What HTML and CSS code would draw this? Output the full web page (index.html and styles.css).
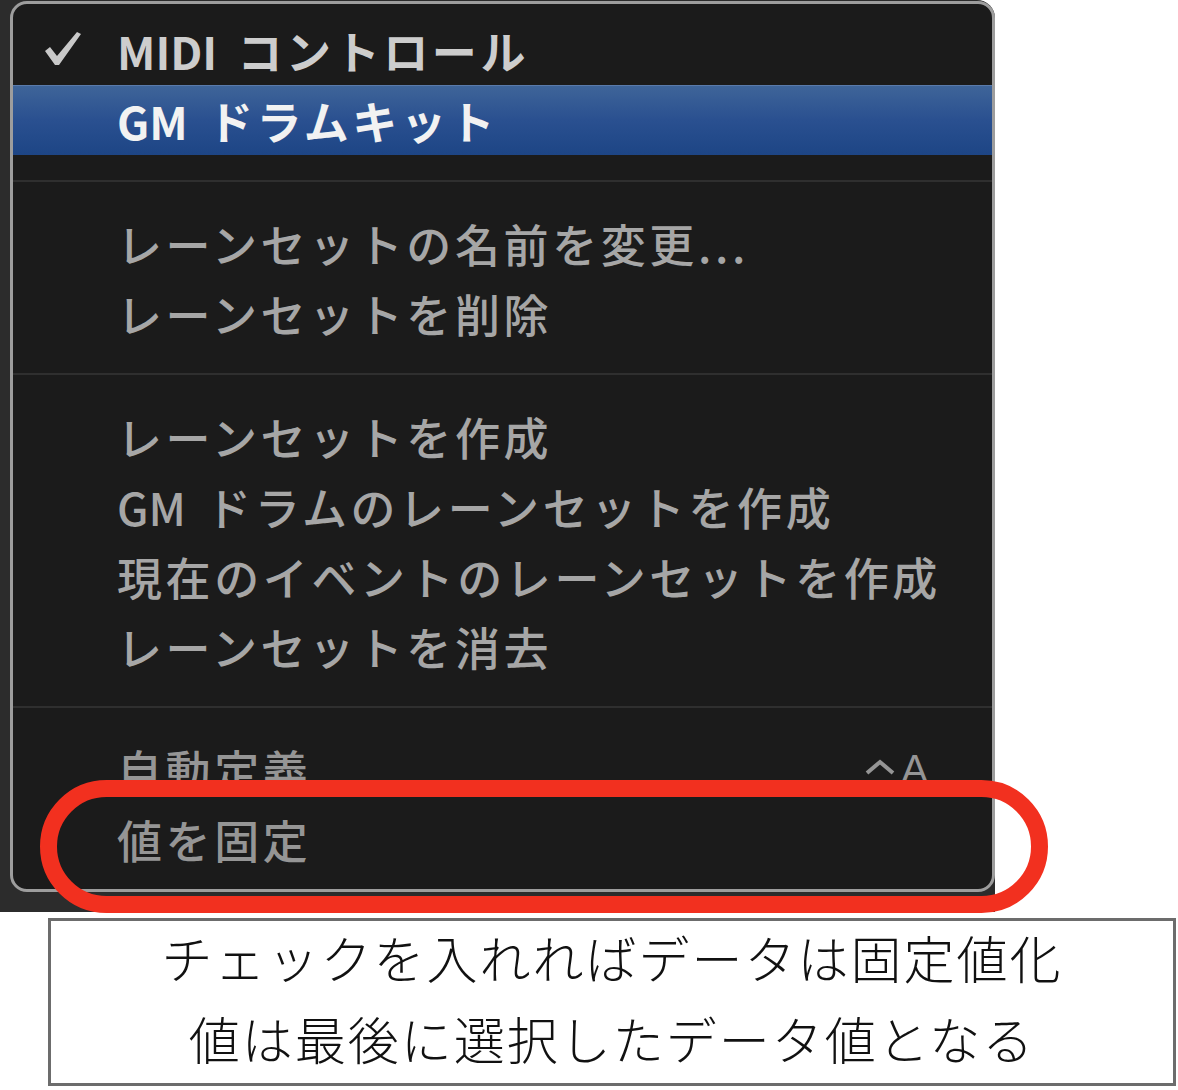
FILE: index.html
```html
<!DOCTYPE html>
<html lang="ja">
<head>
<meta charset="utf-8">
<title>レーンセット メニュー</title>
<link rel="stylesheet" href="styles.css">
</head>
<body>
<div class="shot">
  <div class="menu">
    <div class="item first">
      <span class="mark"><svg class="check" viewBox="0 0 36 34" width="36" height="34"><path d="M0 19 L5 15 L12 24 L32 0 L36 2 L14 33 L10 33 Z" fill="#c9c9c9"/></svg></span>
      <span><span class="lat">MIDI </span>コントロール</span>
    </div>
    <div class="item hl"><span class="mark"></span><span><span class="lat">GM </span>ドラムキット</span></div>
    <div class="sep"></div>
    <div class="item"><span class="mark"></span><span>レーンセットの名前を変更...</span></div>
    <div class="item"><span class="mark"></span><span>レーンセットを削除</span></div>
    <div class="sep"></div>
    <div class="item"><span class="mark"></span><span>レーンセットを作成</span></div>
    <div class="item"><span class="mark"></span><span><span class="lat">GM </span>ドラムのレーンセットを作成</span></div>
    <div class="item"><span class="mark"></span><span>現在のイベントのレーンセットを作成</span></div>
    <div class="item"><span class="mark"></span><span>レーンセットを消去</span></div>
    <div class="sep"></div>
    <div class="item dim"><span class="mark"></span><span>自動定義</span><span class="key"><svg class="caret" viewBox="0 0 30 16" width="30" height="16"><path d="M2 14 L15 3 L28 14" fill="none" stroke="#959595" stroke-width="4"/></svg>A</span></div>
    <div class="item dim"><span class="mark"></span><span>値を固定</span></div>
  </div>
  <div class="ring"></div>
</div>
<div class="caption">
  <p>チェックを入れればデータは固定値化</p>
  <p>値は最後に選択したデータ値となる</p>
</div>
</body>
</html>
```

FILE: styles.css
```css
html, body {
  margin: 0;
  padding: 0;
  background: #ffffff;
}

body {
  width: 1178px;
  height: 1090px;
  overflow: hidden;
  font-family: "Noto Sans CJK JP", "Noto Sans", sans-serif;
}

.shot {
  position: relative;
  width: 995px;
  height: 912px;
  background: #2c2c2c;
  border-top-right-radius: 18px;
  display: flex;
  flex-direction: column;
  align-items: flex-end;
}

.menu {
  box-sizing: border-box;
  width: 985px;
  height: 891px;
  margin-top: 1px;
  border: 3px solid #9d9d9d;
  border-radius: 17px;
  background: #1b1b1b;
  padding-top: 11px;
  display: flex;
  flex-direction: column;
}

.item {
  height: 70px;
  display: flex;
  align-items: center;
  padding-left: 32px;
  font-size: 45px;
  letter-spacing: 3.6px;
  font-weight: 500;
  color: #a6a6a6;
  white-space: nowrap;
}

.lat {
  letter-spacing: 0;
  word-spacing: 10px;
}

.mark {
  width: 72px;
  flex: none;
  display: flex;
  align-items: center;
}

.check {
  display: block;
  margin-top: -2px;
}

.first {
  color: #cdcdcd;
  font-weight: 600;
}

.hl {
  background: linear-gradient(#3f6599, #2a5090 50%, #1d4585);
  color: #f2f2f2;
  font-weight: 600;
  box-shadow: inset 0 1px 0 #5a7bab;
}

.dim {
  color: #959595;
}

.key {
  margin-left: auto;
  padding-right: 64px;
  letter-spacing: 0;
  display: flex;
  align-items: center;
  font-family: "Liberation Sans", sans-serif;
  font-size: 40px;
}

.caret {
  display: block;
  margin-right: 6px;
  margin-top: -4px;
}

.sep {
  height: 2px;
  margin: 25px 0 26px;
  background: #2f2f2f;
}

.ring {
  position: absolute;
  left: 40px;
  top: 780px;
  box-sizing: border-box;
  width: 1008px;
  height: 133px;
  border: 17px solid #f2301f;
  border-radius: 67px;
}

.caption {
  box-sizing: border-box;
  width: 1128px;
  height: 168px;
  margin: 6px 0 0 48px;
  border: 3px solid #6c6c6c;
  text-align: center;
  color: #111111;
  font-size: 51px;
  font-weight: 300;
  letter-spacing: 2px;
  padding-top: 0;
}

.caption p {
  margin: -4px 0 0;
  line-height: 81px;
}

.caption p + p {
  margin-top: 0;
}
```
